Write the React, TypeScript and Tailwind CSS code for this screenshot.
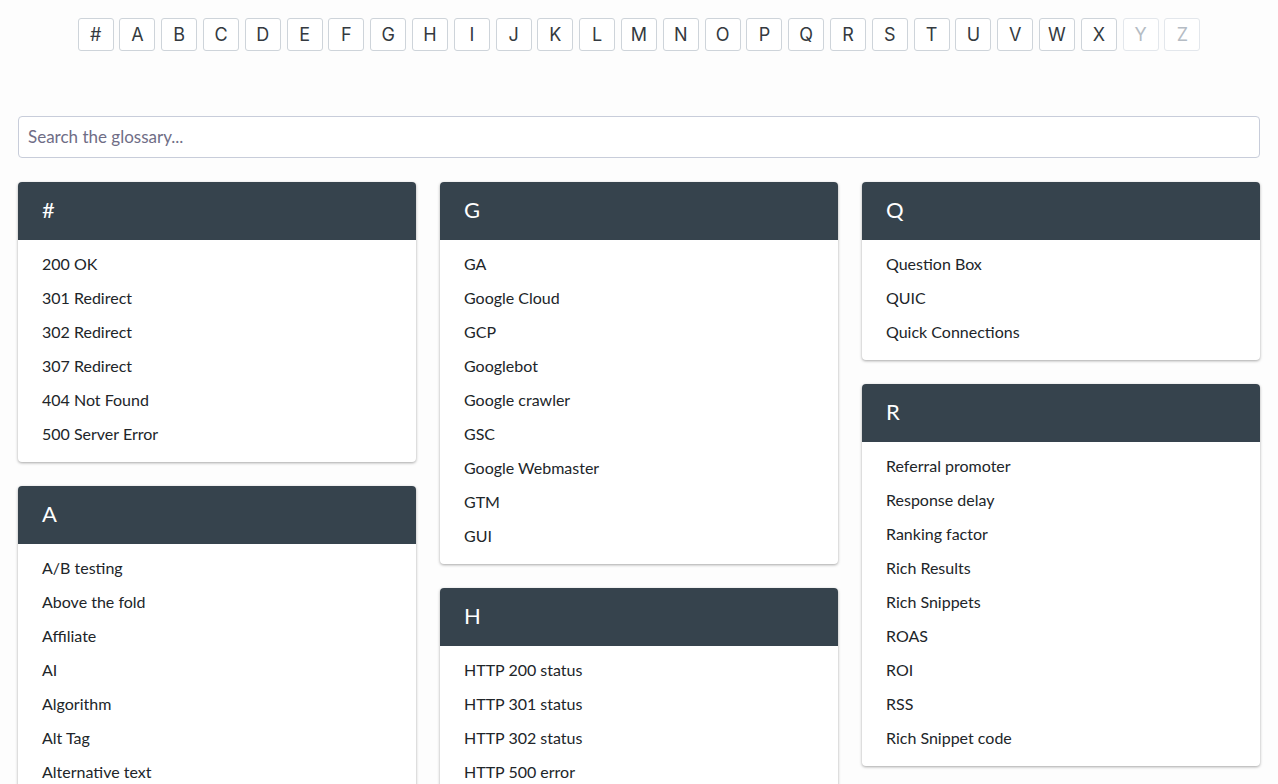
import React from 'react';

const letters = ['#', 'A', 'B', 'C', 'D', 'E', 'F', 'G', 'H', 'I', 'J', 'K', 'L', 'M', 'N', 'O', 'P', 'Q', 'R', 'S', 'T', 'U', 'V', 'W', 'X', 'Y', 'Z'];
const disabled = ['Y', 'Z'];

interface Section {
  letter: string;
  terms: string[];
}

const columns: Section[][] = [
  [
    { letter: '#', terms: ['200 OK', '301 Redirect', '302 Redirect', '307 Redirect', '404 Not Found', '500 Server Error'] },
    {
      letter: 'A',
      terms: ['A/B testing', 'Above the fold', 'Affiliate', 'AI', 'Algorithm', 'Alt Tag', 'Alternative text'],
    },
  ],
  [
    {
      letter: 'G',
      terms: ['GA', 'Google Cloud', 'GCP', 'Googlebot', 'Google crawler', 'GSC', 'Google Webmaster', 'GTM', 'GUI'],
    },
    { letter: 'H', terms: ['HTTP 200 status', 'HTTP 301 status', 'HTTP 302 status', 'HTTP 500 error'] },
  ],
  [
    { letter: 'Q', terms: ['Question Box', 'QUIC', 'Quick Connections'] },
    {
      letter: 'R',
      terms: ['Referral promoter', 'Response delay', 'Ranking factor', 'Rich Results', 'Rich Snippets', 'ROAS', 'ROI', 'RSS', 'Rich Snippet code'],
    },
  ],
];

function GlossaryCard({ section }: { section: Section }) {
  return (
    <div className="bg-white rounded-[4px] shadow-[0_1px_3px_rgba(0,0,0,0.35)] overflow-hidden">
      <div className="h-[58px] bg-[#36434d] flex items-center px-6 pb-[3px] text-white text-[22px]">{section.letter}</div>
      <ul className="pt-[7px] pb-[11px]">
        {section.terms.map((term) => (
          <li key={term} className="h-[34px] flex items-center px-6 text-[16px] text-[#212529]">
            {term}
          </li>
        ))}
      </ul>
    </div>
  );
}

export default function App() {
  return (
    <div className="min-h-screen bg-[#fdfdfd] px-[18px] pt-[18px]" style={{ fontFamily: 'Lato, "Noto Sans", sans-serif' }}>
      <div className="flex justify-center gap-[5.8px]">
        {letters.map((l) => {
          const off = disabled.includes(l);
          return (
            <button
              key={l}
              className={`w-[36px] h-[33px] rounded-[3px] border bg-white flex items-center justify-center text-[18px] ${
                off ? 'border-[#e3e7ec] text-[#b5bcc4]' : 'border-[#ced4da] text-[#343a40]'
              }`}
              style={{ fontFamily: 'Inter, Lato, sans-serif', fontWeight: 400 }}
            >
              {l}
            </button>
          );
        })}
      </div>

      <input
        type="text"
        placeholder="Search the glossary..."
        className="mt-[65px] w-full h-[42px] rounded-[4px] border border-[#c8cdda] bg-white px-[9px] pb-[2px] text-[17px] placeholder:text-[#6f6d86] outline-none"
      />

      <div className="mt-6 grid grid-cols-3 gap-6 items-start">
        {columns.map((col, i) => (
          <div key={i} className="flex flex-col gap-6">
            {col.map((s) => (
              <GlossaryCard key={s.letter} section={s} />
            ))}
          </div>
        ))}
      </div>
    </div>
  );
}
